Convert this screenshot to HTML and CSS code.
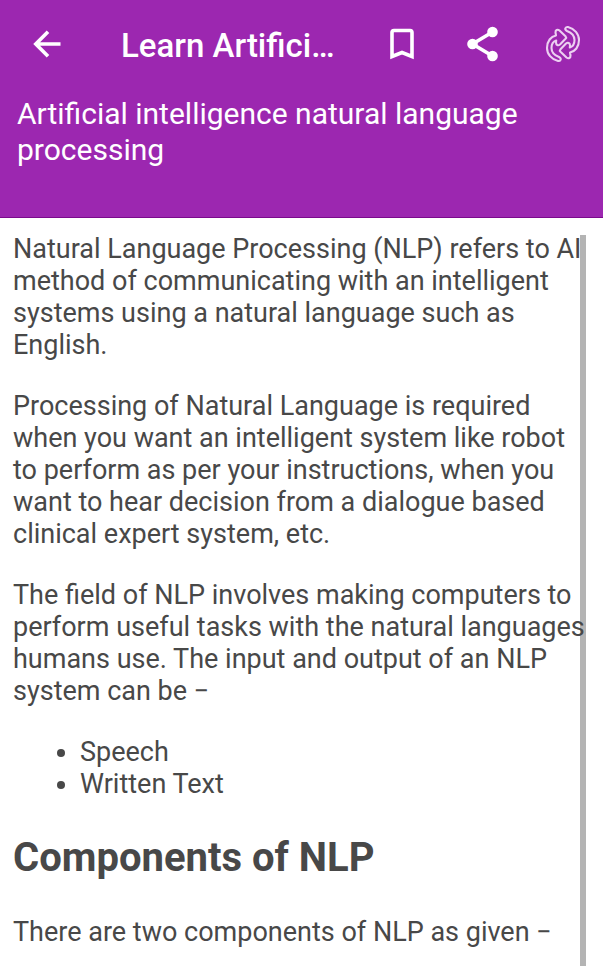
FILE: index.html
```html
<!DOCTYPE html>
<html lang="en">
<head>
<meta charset="utf-8">
<meta name="viewport" content="width=device-width, initial-scale=1">
<title>Artificial intelligence natural language processing</title>
<link rel="stylesheet" href="styles.css">
</head>
<body>
<header class="header">
  <div class="toolbar">
    <button class="icon-button" type="button" aria-label="Back">
      <svg class="icon" viewBox="0 0 40 40"><path d="M33.500 20H9M21 7.800L8.800 20L21 32.200" fill="none" stroke="currentColor" stroke-width="3.600"/></svg>
    </button>
    <h1 class="app-title">Learn Artifici…</h1>
    <div class="actions">
      <button class="icon-button" type="button" aria-label="Bookmark">
        <svg class="icon" viewBox="0 0 40 40"><path d="M9 32.500V8.500Q9 6.500 11 6.500H27Q29 6.500 29 8.500V32.500L19 28.500Z" fill="none" stroke="currentColor" stroke-width="3.600"/></svg>
      </button>
      <button class="icon-button" type="button" aria-label="Share">
        <svg class="icon" viewBox="0 0 40 40"><path d="M29.500 8L9.500 20l20 12" fill="none" stroke="currentColor" stroke-width="3.600"/><g fill="currentColor"><circle cx="29.500" cy="8" r="5.300"/><circle cx="9.500" cy="20" r="5.300"/><circle cx="29.500" cy="32" r="5.300"/></g></svg>
      </button>
      <button class="icon-button" type="button" aria-label="Refresh">
        <svg class="icon refresh" viewBox="0 0 40 40"><g fill="none" stroke="currentColor" stroke-width="2.100" stroke-linejoin="round"><path id="arrow" d="M15 37C8.500 35.500 4 30 4 24C4 17 8 12.500 13 11.500L12.500 8.500C12.300 6 14.500 5 16.500 6.500L22.500 12.200Q23.700 13.500 22.500 14.800L17 20.500C15 22 13 21 13 18.500L13.200 16.500C10 17.500 8.500 20.500 8.500 24C8.500 28.500 12 31.500 16 33Q18.500 34.500 17.500 36Q16.800 37.300 15 37Z"/><use href="#arrow" transform="rotate(180 20 20)"/></g></svg>
      </button>
    </div>
  </div>
  <p class="topic">Artificial intelligence natural language processing</p>
</header>
<main class="article">
  <p>Natural Language Processing (NLP) refers to AI method of communicating with an intelligent systems using a natural language such as English.</p>
  <p>Processing of Natural Language is required when you want an intelligent system like robot to perform as per your instructions, when you want to hear decision from a dialogue based clinical expert system, etc.</p>
  <p>The field of NLP involves making computers to perform useful tasks with the natural languages humans use. The input and output of an NLP system can be −</p>
  <ul>
    <li>Speech</li>
    <li>Written Text</li>
  </ul>
  <h2>Components of NLP</h2>
  <p>There are two components of NLP as given −</p>
  <div class="scroll-thumb"></div>
</main>
</body>
</html>
```
FILE: styles.css
```css
* {
  box-sizing: border-box;
}

body {
  display: flex;
  flex-direction: column;
  min-height: 100vh;
  margin: 0;
  background: #fff;
  color: #484848;
  font-family: Roboto, "Liberation Sans", sans-serif;
}

.header {
  padding-bottom: 49px;
  border-bottom: 1px solid #7b0a8c;
  background: #9c27b0;
  color: #fff;
}

.toolbar {
  display: flex;
  align-items: center;
  height: 90px;
  padding: 0 20px 0 27px;
}

.icon-button {
  flex: none;
  width: 40px;
  height: 40px;
  margin-bottom: 2px;
  padding: 0;
  border: 0;
  background: none;
  color: inherit;
}

.icon {
  display: block;
  width: 100%;
  height: 100%;
}

.refresh {
  color: #eccff1;
}

.app-title {
  flex: 1;
  min-width: 0;
  margin: 2px 40px 0 54px;
  overflow: hidden;
  font-size: 33px;
  font-weight: 500;
  line-height: 40px;
  text-overflow: ellipsis;
  white-space: nowrap;
}

.actions {
  display: flex;
  gap: 40px;
}

.topic {
  margin: 0;
  padding: 6px 17px 0;
  font-size: 30px;
  line-height: 36px;
}

.article {
  position: relative;
  isolation: isolate;
  flex: 1;
  padding: 15px 13px 0;
  font-size: 27px;
  line-height: 32px;
}

.article p,
.article ul {
  margin: 0 0 29px;
}

.article ul {
  padding-left: 67px;
}

.article h2 {
  margin: 34px 0;
  font-size: 40px;
  font-weight: 700;
  line-height: 48px;
}

.article p:last-of-type {
  margin-bottom: 0;
}

.scroll-thumb {
  position: absolute;
  z-index: -1;
  top: 17px;
  right: 17px;
  bottom: 0;
  width: 6px;
  background: #b4b4b4;
}
```
